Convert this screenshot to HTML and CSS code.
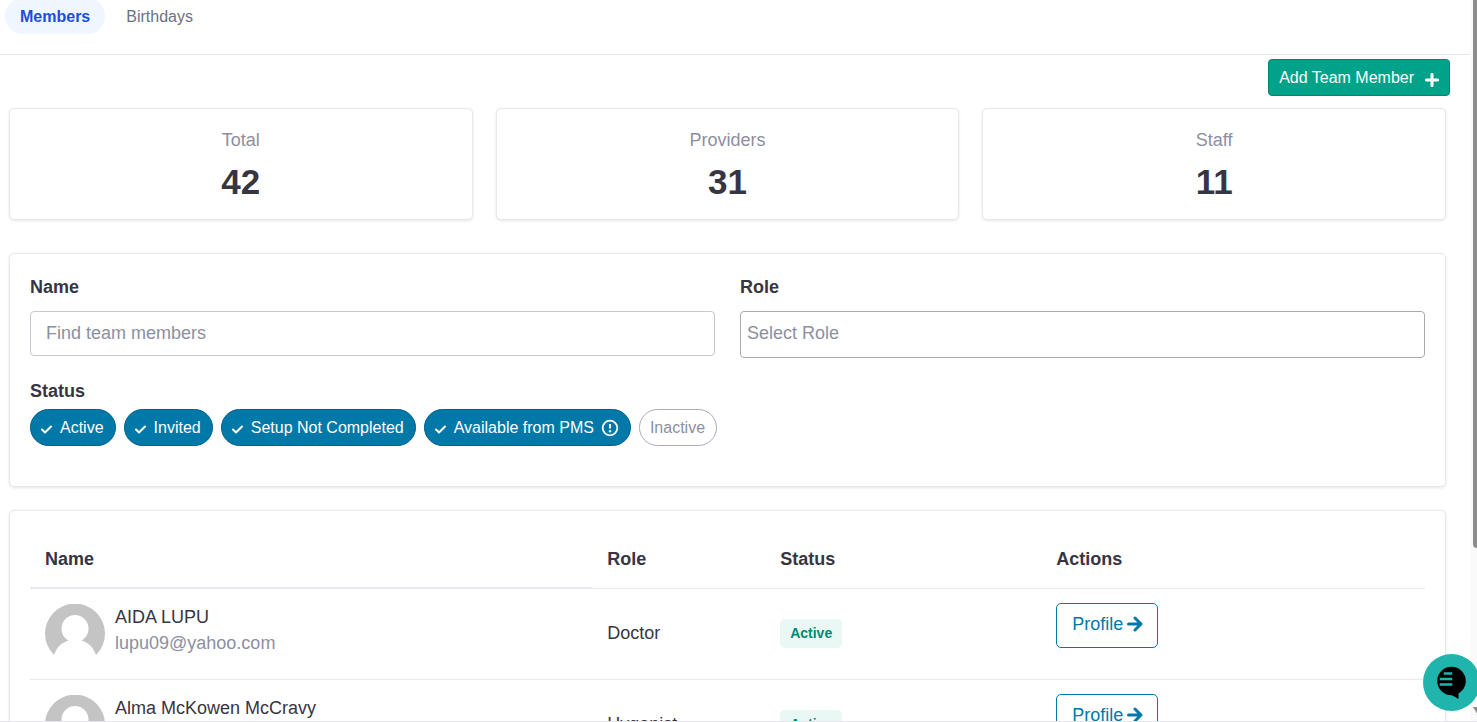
FILE: index.html
```html
<!DOCTYPE html>
<html lang="en">
<head>
    <meta charset="UTF-8">
    <meta name="viewport" content="width=device-width, initial-scale=1.0">
    <title>Team Members</title>
    <link rel="stylesheet" href="styles.css">
</head>
<body>
    <div class="app">
        <div class="page">
            <nav class="tabs">
                <a href="#members" class="tab active">Members</a>
                <a href="#birthdays" class="tab">Birthdays</a>
            </nav>
            <main class="content">
                <div class="toolbar">
                    <button type="button" class="btn-add">
                        Add Team Member
                        <svg width="14" height="14" viewBox="0 0 14 14"><path d="M7 1.2v11.6M1.2 7h11.6" stroke="#fff" stroke-width="3" stroke-linecap="round"/></svg>
                    </button>
                </div>

                <div class="stats">
                    <div class="card stat">
                        <div class="stat-label">Total</div>
                        <div class="stat-value">42</div>
                    </div>
                    <div class="card stat">
                        <div class="stat-label">Providers</div>
                        <div class="stat-value">31</div>
                    </div>
                    <div class="card stat">
                        <div class="stat-label">Staff</div>
                        <div class="stat-value">11</div>
                    </div>
                </div>

                <form class="card filters">
                    <div class="fields">
                        <div class="field">
                            <label for="name">Name</label>
                            <input type="text" id="name" name="name" placeholder="Find team members">
                        </div>
                        <div class="field">
                            <label for="role">Role</label>
                            <select id="role" name="role">
                                <option value="">Select Role</option>
                            </select>
                        </div>
                    </div>
                    <div class="status-label" id="statusLabel">Status</div>
                    <div class="pills" role="group" aria-labelledby="statusLabel">
                        <button type="button" class="pill on" aria-pressed="true">
                            <svg class="check" width="12" height="10" viewBox="0 0 12 10"><path d="M1 5.5l3 3 6-6"/></svg>
                            Active
                        </button>
                        <button type="button" class="pill on" aria-pressed="true">
                            <svg class="check" width="12" height="10" viewBox="0 0 12 10"><path d="M1 5.5l3 3 6-6"/></svg>
                            Invited
                        </button>
                        <button type="button" class="pill on" aria-pressed="true">
                            <svg class="check" width="12" height="10" viewBox="0 0 12 10"><path d="M1 5.5l3 3 6-6"/></svg>
                            Setup Not Completed
                        </button>
                        <button type="button" class="pill on" aria-pressed="true">
                            <svg class="check" width="12" height="10" viewBox="0 0 12 10"><path d="M1 5.5l3 3 6-6"/></svg>
                            Available from PMS
                            <svg width="18" height="18" viewBox="0 0 18 18"><circle cx="9" cy="9" r="7.3" fill="none" stroke="#fff" stroke-width="1.8"/><path d="M9 5v4.5" stroke="#fff" stroke-width="2"/><circle cx="9" cy="12.3" r="1.2" fill="#fff"/></svg>
                        </button>
                        <button type="button" class="pill" aria-pressed="false">Inactive</button>
                    </div>
                </form>

                <div class="card members">
                    <table>
                        <thead>
                            <tr>
                                <th class="col-name">Name</th>
                                <th class="col-role">Role</th>
                                <th class="col-status">Status</th>
                                <th>Actions</th>
                            </tr>
                        </thead>
                        <tbody>
                            <tr>
                                <td>
                                    <div class="person">
                                        <svg class="avatar" width="60" height="60" viewBox="0 0 60 60"><path d="M9 51A30 30 0 1 1 51 51C48 43 44 39 36.5 36.5C41 34 43.5 30 43.5 24.5A13.500 13.500 0 0 0 16.5 24.5C16.5 30 19 34 23.5 36.5C16 39 12 43 9 51Z" fill="#c4c4c4"/></svg>
                                        <div>
                                            <div>AIDA LUPU</div>
                                            <div class="email">lupu09@yahoo.com</div>
                                        </div>
                                    </div>
                                </td>
                                <td class="detail">Doctor</td>
                                <td class="detail"><span class="badge">Active</span></td>
                                <td class="actions">
                                    <a href="#profile" class="btn-profile">Profile <svg width="16" height="16" viewBox="0 0 16 16"><path d="M1.5 8h12M8 2l6 6-6 6"/></svg></a>
                                </td>
                            </tr>
                            <tr>
                                <td>
                                    <div class="person">
                                        <svg class="avatar" width="60" height="60" viewBox="0 0 60 60"><path d="M9 51A30 30 0 1 1 51 51C48 43 44 39 36.5 36.5C41 34 43.5 30 43.5 24.5A13.5 13.5 0 0 0 16.5 24.5C16.5 30 19 34 23.5 36.5C16 39 12 43 9 51Z" fill="#c4c4c4"/></svg>
                                        <div>
                                            <div>Alma McKowen McCravy</div>
                                        </div>
                                    </div>
                                </td>
                                <td class="detail">Hygenist</td>
                                <td class="detail"><span class="badge">Active</span></td>
                                <td class="actions">
                                    <a href="#profile" class="btn-profile">Profile <svg width="16" height="16" viewBox="0 0 16 16"><path d="M1.5 8h12M8 2l6 6-6 6"/></svg></a>
                                </td>
                            </tr>
                        </tbody>
                    </table>
                </div>
            </main>
        </div>

        <div class="scrollbar">
            <div class="thumb"></div>
            <div class="arrow"></div>
        </div>

        <button type="button" class="chat" aria-label="Chat">
            <svg width="30" height="34" viewBox="0 0 30 34"><circle cx="14.500" cy="15" r="14.3"/><path d="M13 28l8.5 5V24z"/><path d="M8 7.500h6M4 13h10M4 18.500h10" stroke="#1fb5ad" stroke-width="2.6" stroke-linecap="square"/></svg>
        </button>
    </div>
</body>
</html>
```

FILE: styles.css
```css
* {
    box-sizing: border-box;
}
body {
    margin: 0;
    font-family: "Liberation Sans", Arial, sans-serif;
    font-size: 18px;
    line-height: 26px;
    color: #373542;
    background-color: #fff;
}
button,
input,
select {
    font-family: inherit;
}
svg {
    flex: none;
}
.app {
    position: relative;
    display: flex;
    height: 100vh;
    overflow: hidden;
    border-bottom: 1px solid #e6e6ea;
}
.page {
    flex: 1;
    min-width: 0;
}

/* tabs */
.tabs {
    display: flex;
    gap: 6px;
    margin-top: -2px;
    padding: 0 5px 20px;
    border-bottom: 1px solid #e8e8eb;
}
.tab {
    padding: 9px 15px 7px;
    border-radius: 18px;
    font-size: 16px;
    line-height: 20px;
    color: #6b7280;
    text-decoration: none;
}
.tab.active {
    font-weight: bold;
    color: #1d4ed8;
    background-color: #eff6ff;
}

.content {
    padding: 4px 24px 24px 9px;
}
.toolbar {
    display: flex;
    justify-content: flex-end;
    margin: 0 -4px 12px 0;
}
.btn-add {
    display: flex;
    align-items: center;
    gap: 11px;
    height: 37px;
    padding: 0 10px;
    border: 1px solid #008573;
    border-radius: 4px;
    font-size: 16px;
    color: #fff;
    background-color: #00a389;
    cursor: pointer;
}
.btn-add svg {
    margin-top: 4px;
}

.card {
    border: 1px solid #e8e8eb;
    border-radius: 5px;
    background-color: #fff;
    box-shadow: 0 1px 3px rgba(0, 0, 0, 0.1);
}

/* totals */
.stats {
    display: grid;
    grid-template-columns: repeat(3, 1fr);
    gap: 23px;
    margin-bottom: 33px;
}
.stat {
    padding: 18px 20px 16px;
    text-align: center;
}
.stat-label {
    margin-bottom: 8px;
    color: #8d8fa1;
}
.stat-value {
    font-size: 35px;
    font-weight: bold;
    line-height: 42px;
}

/* filters */
.filters {
    padding: 20px 20px 40px;
    margin-bottom: 23px;
}
.fields {
    display: grid;
    grid-template-columns: 1fr 1fr;
    gap: 25px;
    margin-bottom: 20px;
}
.field label {
    display: block;
    margin-bottom: 11px;
    font-weight: bold;
}
.field input,
.field select {
    display: block;
    width: 100%;
    border-radius: 4px;
    font-size: 18px;
    background-color: #fff;
}
.field input {
    height: 45px;
    padding: 0 15px;
    border: 1px solid #c7c6d6;
}
.field input::placeholder {
    color: #8d8fa1;
    opacity: 1;
}
.field select {
    height: 47px;
    padding: 0 6px 3px;
    border: 1px solid #aaa;
    color: #8d8fa1;
    appearance: none;
}
.status-label {
    margin-bottom: 5px;
    font-weight: bold;
}
.pills {
    display: flex;
    flex-wrap: wrap;
    gap: 8px;
}
.pill {
    display: flex;
    align-items: center;
    gap: 7px;
    height: 37px;
    padding: 0 11px 0 10px;
    border: 1px solid #a9abbd;
    border-radius: 19px;
    font-size: 16px;
    color: #8d8fa1;
    background-color: #fff;
    cursor: pointer;
}
.pill.on {
    border-color: #00608a;
    color: #fff;
    background-color: #0079a8;
}
.check {
    margin-top: 3px;
    fill: none;
    stroke: #fff;
    stroke-width: 2;
    stroke-linecap: round;
    stroke-linejoin: round;
}

/* members table */
.members {
    padding: 20px;
}
table {
    width: 100%;
    table-layout: fixed;
    border-collapse: separate;
    border-spacing: 0;
}
th,
td {
    padding: 15px;
    border-bottom: 1px solid #e9e9ef;
    text-align: left;
}
th {
    vertical-align: top;
}
.col-name {
    width: 40.3%;
    border-bottom-width: 2px;
}
.col-role {
    width: 12.4%;
}
.col-status {
    width: 19.8%;
}
.person {
    display: flex;
    gap: 10px;
}
.avatar {
    display: block;
}
.email {
    color: #8d8fa1;
}
td.detail {
    padding-bottom: 17px;
}
.badge {
    display: inline-block;
    padding: 0 10px;
    border-radius: 5px;
    font-size: 14px;
    font-weight: bold;
    line-height: 29px;
    color: #008a73;
    background-color: #e9f7f5;
}
td.actions {
    padding-top: 14px;
    vertical-align: top;
}
.btn-profile {
    display: inline-flex;
    align-items: center;
    gap: 4px;
    height: 45px;
    padding: 0 14px 3px 15px;
    border: 1px solid #0079a8;
    border-radius: 5px;
    color: #0079a8;
    text-decoration: none;
}
.btn-profile path {
    fill: none;
    stroke: #0079a8;
    stroke-width: 3;
    stroke-linecap: round;
    stroke-linejoin: round;
}

/* scrollbar and chat launcher */
.scrollbar {
    display: flex;
    flex-direction: column;
    width: 7px;
    padding-left: 3px;
    background-color: #fafafa;
}
.thumb {
    height: 76%;
    border-bottom-left-radius: 4px;
    background-color: #8b8b8b;
}
.arrow {
    width: 10px;
    height: 8px;
    margin: auto 0 6px;
    background-color: #8b8b8b;
    clip-path: polygon(0 0, 100% 0, 50% 100%);
}
.chat {
    position: absolute;
    right: -3px;
    bottom: 10px;
    display: flex;
    align-items: center;
    justify-content: center;
    width: 57px;
    height: 57px;
    padding: 0;
    border: none;
    border-radius: 50%;
    background-color: #1fb5ad;
    cursor: pointer;
}
```
